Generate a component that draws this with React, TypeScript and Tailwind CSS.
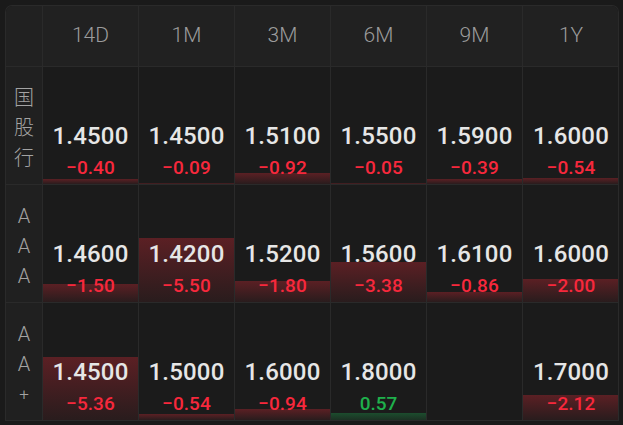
import React from 'react';

const tenors = ['14D', '1M', '3M', '6M', '9M', '1Y'];

type Cell = { rate: string; chg: number } | null;

const rows: { label: string[]; cells: Cell[] }[] = [
  {
    label: ['国', '股', '行'],
    cells: [
      { rate: '1.4500', chg: -0.4 },
      { rate: '1.4500', chg: -0.09 },
      { rate: '1.5100', chg: -0.92 },
      { rate: '1.5500', chg: -0.05 },
      { rate: '1.5900', chg: -0.39 },
      { rate: '1.6000', chg: -0.54 },
    ],
  },
  {
    label: ['A', 'A', 'A'],
    cells: [
      { rate: '1.4600', chg: -1.5 },
      { rate: '1.4200', chg: -5.5 },
      { rate: '1.5200', chg: -1.8 },
      { rate: '1.5600', chg: -3.38 },
      { rate: '1.6100', chg: -0.86 },
      { rate: '1.6000', chg: -2.0 },
    ],
  },
  {
    label: ['A', 'A', '+'],
    cells: [
      { rate: '1.4500', chg: -5.36 },
      { rate: '1.5000', chg: -0.54 },
      { rate: '1.6000', chg: -0.94 },
      { rate: '1.8000', chg: 0.57 },
      null,
      { rate: '1.7000', chg: -2.12 },
    ],
  },
];

const fmt = (v: number) => (v < 0 ? '\u2212' + Math.abs(v).toFixed(2) : v.toFixed(2));

function RateCell({ cell, last }: { cell: Cell; last: boolean }) {
  return (
    <div
      className={`relative h-[118px] bg-[#1b1b1b] border-b border-[#2a2a2a] ${last ? '' : 'border-r'}`}
    >
      {cell && (
        <>
          {/* change bar */}
          <div
            className={`absolute left-0 right-0 bottom-0 ${
              cell.chg < 0
                ? 'bg-gradient-to-b from-[rgba(205,40,52,0.36)] to-[rgba(205,40,52,0.08)]'
                : 'bg-gradient-to-b from-[rgba(30,170,80,0.35)] to-[rgba(30,170,80,0.15)]'
            }`}
            style={{ height: Math.max(1, Math.round(Math.abs(cell.chg) * 11.7)) }}
          />
          <div className="relative h-full flex flex-col items-center justify-end pb-[4px]">
            <div className="mb-[5px] text-[24px] leading-[30px] font-medium text-[#e6e6e6] tracking-[0.2px]">
              {cell.rate}
            </div>
            <div
              className={`text-[19px] leading-[24px] font-medium ${
                cell.chg < 0 ? 'text-[#f7283c]' : 'text-[#1fb04c]'
              }`}
            >
              {fmt(cell.chg)}
            </div>
          </div>
        </>
      )}
    </div>
  );
}

export default function App() {
  return (
    <div
      className="w-[623px] h-[425px] bg-[#1a1a1a] pt-[5px] pl-[5px] overflow-hidden"
      style={{ fontFamily: 'Roboto, "Noto Sans CJK SC", sans-serif' }}
    >
      <div className="w-[614px] rounded-t-[7px] border-t border-l border-r border-[#2a2a2a] overflow-hidden grid grid-cols-[37px_repeat(6,96px)]">
        {/* header */}
        <div className="h-[61px] bg-[#212121] border-r border-b border-[#2a2a2a]" />
        {tenors.map((t, i) => (
          <div
            key={t}
            className={`h-[61px] bg-[#212121] border-b border-[#2a2a2a] flex items-center justify-center text-[21px] font-light text-[#9c9c9c] ${
              i === tenors.length - 1 ? '' : 'border-r'
            }`}
          >
            {t}
          </div>
        ))}

        {rows.map((r, ri) => (
          <React.Fragment key={ri}>
            <div className="h-[118px] bg-[#202020] border-r border-b border-[#2a2a2a] flex flex-col items-center justify-center pt-[4px]">
              {r.label.map((ch, ci) => (
                <span
                  key={ci}
                  className={`leading-[30px] text-[#a3a3a3] font-light ${ch === '+' ? 'text-[17px]' : 'text-[20px]'}`}
                >
                  {ch}
                </span>
              ))}
            </div>
            {r.cells.map((c, ci) => (
              <RateCell key={ci} cell={c} last={ci === r.cells.length - 1} />
            ))}
          </React.Fragment>
        ))}
      </div>
    </div>
  );
}
